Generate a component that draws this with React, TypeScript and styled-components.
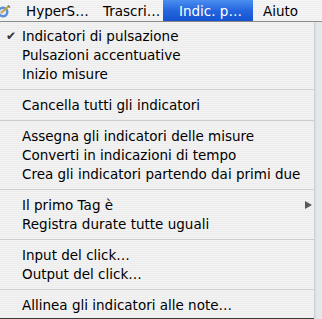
import React from "react";
import styled, { createGlobalStyle } from "styled-components";

const Global = createGlobalStyle`
  html, body { margin: 0; padding: 0; }
  body {
    width: 322px; height: 319px; overflow: hidden;
    background: #e4e7ec;
    font-family: "DejaVu Sans", "Liberation Sans", sans-serif;
  }
`;

const Screen = styled.div`
  width: 322px;
  height: 319px;
  display: flex;
  flex-direction: column;
`;

const MenuBar = styled.div`
  height: 21px;
  border-bottom: 1px solid #8e8e8e;
  display: flex;
  align-items: stretch;
  background: repeating-linear-gradient(to bottom, #f6f6f6 0px, #f6f6f6 1px, #ededed 1px, #ededed 2px);
  font-size: 13.5px;
  color: #000;
`;

const AppIcon = styled.div`
  width: 14px;
  display: flex;
  align-items: center;
  margin-left: -3px;
  margin-right: 3px;
`;

const BarItem = styled.div<{ $active?: boolean; $w: number; $pad: number }>`
  width: ${(p) => p.$w}px;
  padding-left: ${(p) => p.$pad}px;
  box-sizing: border-box;
  display: flex;
  align-items: center;
  white-space: nowrap;
  color: ${(p) => (p.$active ? "#fff" : "#000")};
  background: ${(p) =>
    p.$active ? "linear-gradient(to bottom, #4a8ef0 0%, #2566de 50%, #1553d0 100%)" : "transparent"};
`;

const Menu = styled.div`
  width: 314px;
  flex: 1;
  display: flex;
  flex-direction: column;
  padding-top: 4px;
  box-sizing: border-box;
  background: repeating-linear-gradient(to bottom, #f3f3f3 0px, #f3f3f3 1px, #ececec 1px, #ececec 2px);
  border-bottom: 1px solid #3c3c3c;
  box-shadow: 1px 0 2px rgba(0,0,0,0.15);
  font-size: 13.5px;
  color: #000;
`;

const Row = styled.div`
  height: 19px;
  display: grid;
  grid-template-columns: 22px 1fr 14px;
  align-items: center;
  white-space: nowrap;
`;

const Check = styled.span`
  font-size: 12px;
  padding-left: 6px;
  color: #333;
`;

const Arrow = styled.span`
  width: 0; height: 0;
  margin-left: 5px;
  border-top: 4.5px solid transparent;
  border-bottom: 4.5px solid transparent;
  border-left: 7px solid #5a5a5a;
`;

const Separator = styled.div`
  height: 12px;
  display: flex;
  align-items: center;
  &::after {
    content: "";
    flex: 1;
    height: 1px;
    background: #cdcdcd;
  }
`;

type Item = { label?: string; checked?: boolean; sub?: boolean; sep?: boolean };

const items: Item[] = [
  { label: "Indicatori di pulsazione", checked: true },
  { label: "Pulsazioni accentuative" },
  { label: "Inizio misure" },
  { sep: true },
  { label: "Cancella tutti gli indicatori" },
  { sep: true },
  { label: "Assegna gli indicatori delle misure" },
  { label: "Converti in indicazioni di tempo" },
  { label: "Crea gli indicatori partendo dai primi due" },
  { sep: true },
  { label: "Il primo Tag è", sub: true },
  { label: "Registra durate tutte uguali" },
  { sep: true },
  { label: "Input del click…" },
  { label: "Output del click…" },
  { sep: true },
  { label: "Allinea gli indicatori alle note…" },
];

const bar = [
  { label: "HyperS…", w: 77, pad: 12 },
  { label: "Trascri…", w: 72, pad: 12 },
  { label: "Indic. p…", w: 90, pad: 16, active: true },
  { label: "Aiuto", w: 69, pad: 10 },
];

export default function App() {
  return (
    <Screen>
      <Global />
      <MenuBar>
        <AppIcon>
          <svg width="14" height="14" viewBox="0 0 14 14">
            <circle cx="6" cy="8" r="5.5" fill="#5d8fd8" />
            <circle cx="6" cy="8" r="3" fill="#e8eef8" />
            <path d="M4 9 L12 2" stroke="#c9a23a" strokeWidth="2" />
            <path d="M11 1.5 L13 3.5" stroke="#777" strokeWidth="1.5" />
          </svg>
        </AppIcon>
        {bar.map((b) => (
          <BarItem key={b.label} $w={b.w} $pad={b.pad} $active={b.active}>
            {b.label}
          </BarItem>
        ))}
      </MenuBar>
      <Menu>
        {items.map((it, i) =>
          it.sep ? (
            <Separator key={i} />
          ) : (
            <Row key={i}>
              <Check>{it.checked ? "✔" : ""}</Check>
              <span>{it.label}</span>
              {it.sub ? <Arrow /> : <span />}
            </Row>
          )
        )}
      </Menu>
    </Screen>
  );
}
